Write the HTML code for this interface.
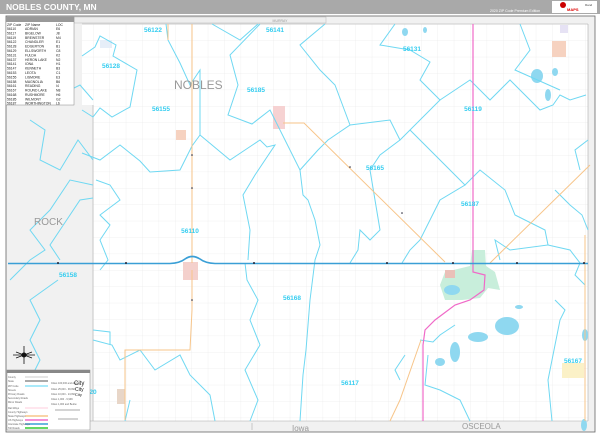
<!DOCTYPE html>
<html><head><meta charset="utf-8"><style>
html,body{margin:0;padding:0;background:#fff;width:600px;height:436px;overflow:hidden;font-family:"Liberation Sans",sans-serif}
</style></head><body>
<svg width="600" height="436" viewBox="0 0 600 436" xmlns="http://www.w3.org/2000/svg" font-family="Liberation Sans, sans-serif">
<defs>
<pattern id="g" x="93" y="24" width="16.4" height="16.4" patternUnits="userSpaceOnUse">
<path d="M0 0V16.4M0 0H16.4" stroke="#e4e4e4" stroke-width="0.5" fill="none"/>
</pattern>
</defs>
<rect width="600" height="436" fill="#fff"/>
<rect x="0" y="0" width="600" height="14" fill="#a9a9a9"/>
<text x="6" y="10" font-size="8.5" font-weight="bold" fill="#fff">NOBLES COUNTY, MN</text>
<text x="490" y="12" font-size="3.5" fill="#fff">2020 ZIP Code Premium Edition</text>
<rect x="552" y="1" width="45" height="12" fill="#fff"/>
<circle cx="563" cy="5" r="3" fill="#c00"/>
<text x="567" y="11" font-size="4" font-weight="bold" fill="#d00">MAPS</text>
<text x="585" y="6" font-size="3" fill="#444">Rand</text>
<rect x="6" y="16" width="589" height="416" fill="#f1f1f1" stroke="#666" stroke-width="0.8"/>
<rect x="82" y="24" width="506" height="397" fill="#fff"/>
<rect x="82" y="24" width="506" height="397" fill="url(#g)"/>
<rect x="82" y="105" width="11" height="316" fill="#f1f1f1"/>
<line x1="93" y1="105" x2="93" y2="421" stroke="#aaa" stroke-width="0.6"/>
<line x1="6" y1="421" x2="588" y2="421" stroke="#aaa" stroke-width="0.6"/>
<line x1="588" y1="24" x2="588" y2="421" stroke="#aaa" stroke-width="0.6"/>
<line x1="82" y1="24" x2="588" y2="24" stroke="#aaa" stroke-width="0.6"/>
<line x1="252" y1="423" x2="252" y2="430" stroke="#aaa" stroke-width="0.6"/>
<rect x="74" y="17" width="252" height="6" fill="#eee" stroke="#aaa" stroke-width="0.4"/>
<text x="280" y="22" font-size="3.5" fill="#999" text-anchor="middle">MURRAY</text>

<g fill="#8fd8f0">
<ellipse cx="405" cy="32" rx="3" ry="4"/>
<ellipse cx="425" cy="30" rx="2" ry="3"/>
<ellipse cx="537" cy="76" rx="6" ry="7"/>
<ellipse cx="555" cy="72" rx="3" ry="4"/>
<ellipse cx="548" cy="95" rx="3" ry="6"/>
<ellipse cx="507" cy="326" rx="12" ry="9"/>
<ellipse cx="478" cy="337" rx="10" ry="5"/>
<ellipse cx="455" cy="352" rx="5" ry="10"/>
<ellipse cx="440" cy="362" rx="5" ry="4"/>
<ellipse cx="519" cy="307" rx="4" ry="2"/>
<ellipse cx="585" cy="335" rx="3" ry="6"/>
<ellipse cx="584" cy="425" rx="3" ry="6"/>
</g>
<path d="M445 272 L470 266 L472 250 L485 250 L486 266 L495 272 L500 290 L488 288 L480 298 L462 300 L445 300 L440 285Z" fill="#c8eedb"/>
<ellipse cx="452" cy="290" rx="8" ry="5" fill="#8fd8f0"/>
<rect x="445" y="270" width="10" height="8" fill="#eac0b8"/>
<rect x="562" y="363" width="22" height="15" fill="#fbf1c7"/>
<rect x="552" y="41" width="14" height="16" fill="#f6d2c0"/>
<rect x="560" y="25" width="8" height="8" fill="#e6e2f4"/>
<rect x="273" y="106" width="12" height="23" fill="#f6d2d2"/>
<rect x="176" y="130" width="10" height="10" fill="#f6d2c0"/>
<rect x="183" y="262" width="15" height="18" fill="#f4d0cc"/>
<rect x="117" y="389" width="8" height="15" fill="#e8d6c8"/>
<rect x="100" y="40" width="12" height="8" fill="#e6eef8"/>

<g fill="none" stroke="#6fd8f2" stroke-width="1">
<path d="M82 56 L95 47 L100 36 L116 45 L113 56 L137 70 L130 107 L112 117 L100 108 L93 117 L82 110"/>
<path d="M166 24 L168 40 L180 63 L190 85 L200 70 L200 90 L200 135 L192 146 L180 170 L150 172 L140 161 L120 145 L100 160 L82 153"/>
<path d="M212 24 L240 40 L258 24"/>
<path d="M260 24 L230 55 L238 85 L228 115 L252 124 L270 110 L300 170 L303 195 L308 200 L315 220 L320 245 L315 260 L310 300 L306 350 L303 375 L300 421"/>
<path d="M325 24 L300 45 L320 70 L335 85 L350 125 L328 140 L318 150 L300 170"/>
<path d="M200 135 L230 160 L260 140 L267 147 L275 145 L255 175 L243 195 L250 230 L248 260"/>
<path d="M350 125 L390 120 L400 140 L380 155 L370 170 L375 200 L380 230 L370 240 L360 230 L358 250 L350 263"/>
<path d="M395 24 L380 45 L410 50 L430 62 L420 80 L440 100 L410 130 L400 140"/>
<path d="M440 100 L470 80 L490 100 L510 80 L540 110 L553 105 L560 95 L570 100 L586 95"/>
<path d="M520 24 L530 50 L515 70 L560 90"/>
<path d="M410 130 L430 150 L450 170 L465 185 L440 200 L420 240 L410 250 L402 263"/>
<path d="M465 185 L480 170 L505 190 L515 215 L545 230 L548 245 L510 250 L495 240 L500 260"/>
<path d="M555 190 L570 205 L582 215 L588 230"/>
<path d="M548 245 L570 250 L580 263 L575 275 L585 285"/>
<path d="M96 180 L110 185 L120 200 L100 215 L110 225 L100 240 L108 260 L100 270"/>
<path d="M20 45 L40 60 L25 80 L50 100 L80 85 L93 100"/>
<path d="M30 120 L45 130 L40 160 L60 170 L78 140 L93 160"/>
<path d="M93 185 L70 180 L50 210 L30 230 L45 250 L30 260 L10 280"/>
<path d="M93 198 L80 200 L60 230 L50 245 L60 260"/>
<path d="M58 280 L30 300 L40 320 L30 340 L40 360 L30 380 L45 400 L35 421"/>
<path d="M245 263 L247 280 L258 300 L250 320 L260 345 L245 370 L258 400 L250 421"/>
<path d="M130 400 L125 421"/>
<path d="M93 340 L112 345 L120 360 L140 350 L155 370 L180 355 L190 375 L210 395 L215 421"/>
<path d="M93 330 L110 332 L110 345"/>
<path d="M420 340 L433 342 L440 335 L455 325"/>
<path d="M428 355 L425 385 L440 390 L460 400 L470 421"/>
<path d="M555 300 L565 310 L560 320 L548 380 L552 421"/>
<path d="M405 355 L395 370 L400 380"/>
<path d="M588 140 L575 150 L580 170"/>
</g>
<g fill="none" stroke="#f7c58a" stroke-width="1">
<path d="M168 24 L168 40"/>
<path d="M192 24 L192 263"/>
<path d="M192 270 L192 310"/>
<path d="M283 123 L304 123 L445 262"/>
<path d="M490 263 L590 165"/>
<path d="M125 420 L125 350 L190 350 L192 310"/>
<path d="M421 340 L400 400 L390 421"/>
<path d="M585 235 L585 421"/>
</g>
<path d="M473 24 L473 272 L485 275 L484 290 L470 300 L455 305 L435 320 L425 330 L423 345 L423 421" fill="none" stroke="#f06ac8" stroke-width="1.2"/>
<path d="M8 263.5 L170 263.5 Q180 263 185 259 Q192 254 200 259 Q205 263 215 263.5 L588 263.5" fill="none" stroke="#3a9fd6" stroke-width="1.6"/>
<g fill="#223">
<circle cx="58" cy="263" r="1"/><circle cx="126" cy="263" r="1"/><circle cx="254" cy="263" r="1"/><circle cx="387" cy="263" r="1"/><circle cx="453" cy="263" r="1"/><circle cx="517" cy="263" r="1"/><circle cx="584" cy="263" r="1"/>
<circle cx="192" cy="188" r="0.8"/><circle cx="192" cy="155" r="0.8"/><circle cx="192" cy="300" r="0.8"/><circle cx="350" cy="167" r="0.8"/><circle cx="402" cy="213" r="0.8"/>
</g>

<g font-size="6.5" font-weight="bold" fill="#35cdf0" text-anchor="middle">
<text x="153" y="32">56122</text>
<text x="275" y="32">56141</text>
<text x="412" y="51">56131</text>
<text x="111" y="68">56128</text>
<text x="256" y="92">56185</text>
<text x="161" y="111">56155</text>
<text x="473" y="111">56119</text>
<text x="375" y="170">56165</text>
<text x="470" y="206">56187</text>
<text x="190" y="233">56110</text>
<text x="68" y="277">56158</text>
<text x="292" y="300">56168</text>
<text x="350" y="385">56117</text>
<text x="573" y="363">56167</text>
<text x="93" y="394">20</text>
</g>
<text x="174" y="89" font-size="12" fill="#999">NOBLES</text>
<text x="34" y="225" font-size="10" fill="#999">ROCK</text>
<text x="292" y="431" font-size="8" fill="#999">Iowa</text>
<text x="462" y="429" font-size="8" fill="#999">OSCEOLA</text>

<rect x="6" y="17" width="68" height="88" fill="#fff" stroke="#888" stroke-width="0.5"/>
<rect x="6" y="17" width="68" height="5" fill="#999"/>
<g font-size="3.4" fill="#222">
<text x="7" y="26">ZIP Code</text><text x="25" y="26">ZIP Name</text><text x="56" y="26">LOC</text>
<text x="7" y="30">56110</text><text x="25" y="30">ADRIAN</text><text x="56" y="30">E6</text>
<text x="7" y="34.4">56117</text><text x="25" y="34.4">BIGELOW</text><text x="56" y="34.4">J8</text>
<text x="7" y="38.8">56119</text><text x="25" y="38.8">BREWSTER</text><text x="56" y="38.8">M4</text>
<text x="7" y="43.2">56122</text><text x="25" y="43.2">CHANDLER</text><text x="56" y="43.2">E1</text>
<text x="7" y="47.6">56128</text><text x="25" y="47.6">EDGERTON</text><text x="56" y="47.6">B1</text>
<text x="7" y="52">56129</text><text x="25" y="52">ELLSWORTH</text><text x="56" y="52">C8</text>
<text x="7" y="56.4">56131</text><text x="25" y="56.4">FULDA</text><text x="56" y="56.4">K2</text>
<text x="7" y="60.8">56137</text><text x="25" y="60.8">HERON LAKE</text><text x="56" y="60.8">N2</text>
<text x="7" y="65.2">56141</text><text x="25" y="65.2">IONA</text><text x="56" y="65.2">H1</text>
<text x="7" y="69.6">56147</text><text x="25" y="69.6">KENNETH</text><text x="56" y="69.6">B3</text>
<text x="7" y="74">56153</text><text x="25" y="74">LEOTA</text><text x="56" y="74">C1</text>
<text x="7" y="78.4">56155</text><text x="25" y="78.4">LISMORE</text><text x="56" y="78.4">E3</text>
<text x="7" y="82.8">56158</text><text x="25" y="82.8">MAGNOLIA</text><text x="56" y="82.8">B6</text>
<text x="7" y="87.2">56161</text><text x="25" y="87.2">READING</text><text x="56" y="87.2">I4</text>
<text x="7" y="91.6">56167</text><text x="25" y="91.6">ROUND LAKE</text><text x="56" y="91.6">N8</text>
<text x="7" y="96">56168</text><text x="25" y="96">RUSHMORE</text><text x="56" y="96">H6</text>
<text x="7" y="100.4">56185</text><text x="25" y="100.4">WILMONT</text><text x="56" y="100.4">G2</text>
<text x="7" y="104.4">56187</text><text x="25" y="104.4">WORTHINGTON</text><text x="56" y="104.4">L6</text>
</g>
<g stroke="#111" stroke-width="0.8">
<line x1="16" y1="352" x2="32" y2="358"/><line x1="16" y1="358" x2="32" y2="352"/>
<line x1="24" y1="346" x2="24" y2="364"/><line x1="13" y1="355" x2="35" y2="355"/>
</g>
<circle cx="24" cy="355" r="2.5" fill="#111"/>
<rect x="7" y="370" width="83" height="60" fill="#fff" stroke="#888" stroke-width="0.5"/>
<rect x="7" y="370" width="83" height="3" fill="#888"/>
<g stroke-width="1">
<line x1="25" y1="377" x2="48" y2="377" stroke="#ccc"/>
<line x1="25" y1="381" x2="48" y2="381" stroke="#555"/>
<line x1="25" y1="386" x2="48" y2="386" stroke="#8ee4f8" stroke-width="1.5"/>
<line x1="25" y1="408" x2="48" y2="408" stroke="#fcd"/>
<line x1="25" y1="416" x2="48" y2="416" stroke="#f7c58a" stroke-width="1.5"/>
<line x1="25" y1="420" x2="48" y2="420" stroke="#f06ac8" stroke-width="1.5"/>
<line x1="25" y1="424" x2="48" y2="424" stroke="#3a9fd6" stroke-width="1.5"/>
<line x1="25" y1="428" x2="48" y2="428" stroke="#3c3" stroke-width="1.5"/>
<line x1="55" y1="410" x2="80" y2="410" stroke="#555" stroke-width="0.5"/>
<line x1="58" y1="419" x2="78" y2="419" stroke="#555" stroke-width="0.5"/>
</g>
<g font-size="2.5" fill="#666">
<text x="8" y="378">County</text><text x="8" y="382">State</text><text x="8" y="387">ZIP Code</text><text x="8" y="391">Streets</text>
<text x="8" y="395">Primary Roads</text><text x="8" y="399">Secondary Roads</text><text x="8" y="403">Minor Roads</text>
<text x="8" y="409">Rail Ways</text><text x="8" y="413">County Highways</text><text x="8" y="417">State Highways</text>
<text x="8" y="421">US Highways</text><text x="8" y="425">Interstate Highways</text><text x="8" y="429">Toll Roads</text>
<text x="51" y="384">Cities 100,000 and Above</text><text x="51" y="390">Cities 25,000 - 99,999</text>
<text x="51" y="395">Cities 10,000 - 24,999</text><text x="51" y="400">Cities 1,000 - 9,999</text><text x="51" y="405">Cities 1,000 and Below</text>
</g>
<g font-size="5" fill="#222"><text x="74" y="385" font-size="6">City</text><text x="75" y="391">City</text><text x="75" y="396" font-size="4">City</text></g>
</svg>
</body></html>
